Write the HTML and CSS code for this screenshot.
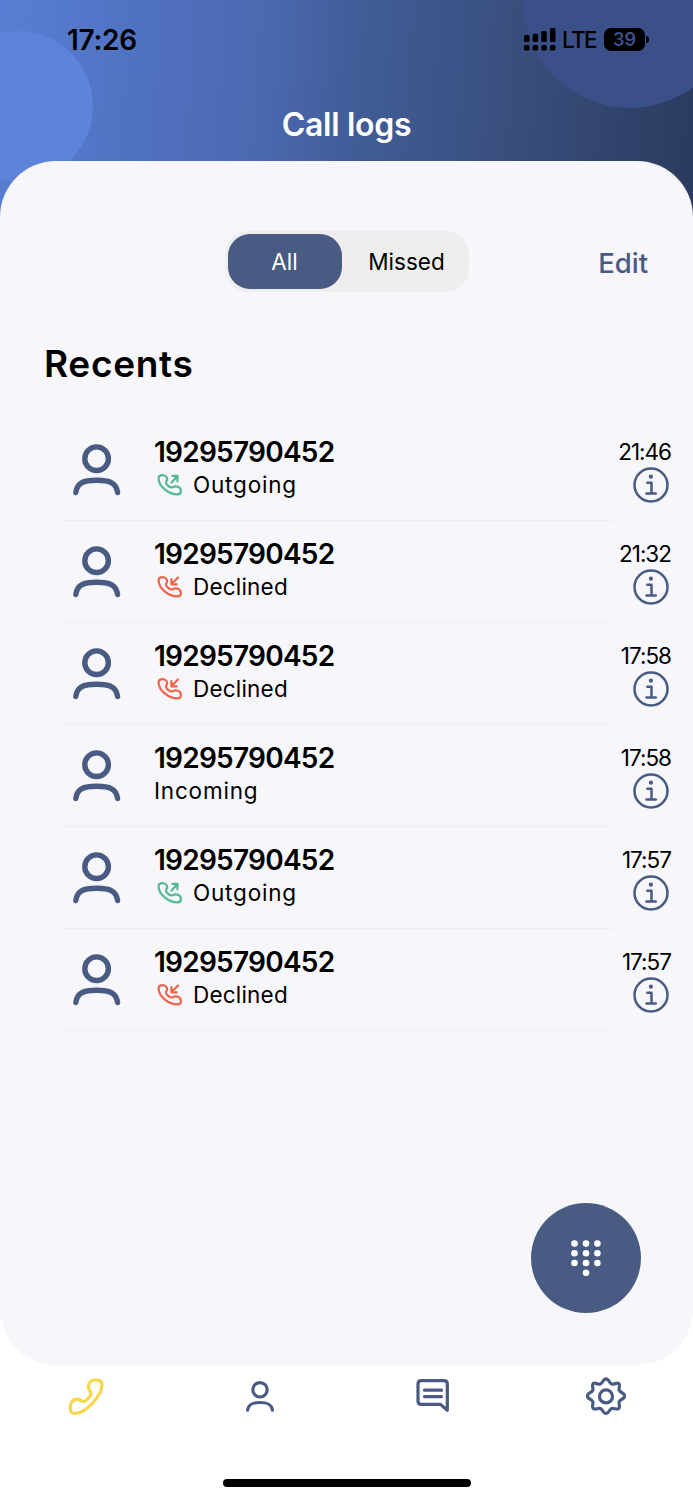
FILE: index.html
```html
<!DOCTYPE html>
<html lang="en">

<head>
  <meta charset="UTF-8">
  <meta name="viewport" content="width=device-width, initial-scale=1.0">
  <title>Call logs</title>
  <link rel="stylesheet" href="styles.css">
</head>

<body>
  <!-- shared icons -->
  <svg class="sprite" width="0" height="0">
    <symbol id="user" viewBox="0 0 48 52">
      <circle cx="23.6" cy="14.7" r="11.8" />
      <path d="M2.800 48.500C4 39 10 36.300 23.600 36.300S43.300 39 44.600 48.500" />
    </symbol>
    <symbol id="handset" viewBox="0 0 26 22">
      <path d="M1.600 3.500C2.200 1.800 4 1.100 5.600 1.200 8 1.300 10 3 10.200 5c.2 1.600-1.300 2.200-1.200 3.700.1 1.700 3.300 4.600 5.200 4.800 1.700.2 2.300-1.300 4.500-1.100 2.900.2 5.200 2 5.200 4.800 0 2.200-1.100 3.100-3.200 3.200C12 20.500 1 12.600 1.600 3.500Z" />
    </symbol>
    <symbol id="outgoing" viewBox="0 0 26 22">
      <use href="#handset" />
      <path d="M14.500 8.500 20.500 2M15.500 1.900h5v5.400" />
    </symbol>
    <symbol id="declined" viewBox="0 0 26 22">
      <use href="#handset" />
      <path d="M21 1.500 14.500 8M14.400 3.200v5.100h5.300" />
    </symbol>
    <symbol id="info" viewBox="0 0 36 36">
      <circle cx="18" cy="18" r="16.500" />
      <path d="M14.300 15.800h4.200v10.500M13.500 26.500h9.300" />
      <circle class="dot" cx="17.900" cy="9.700" r="2.100" />
    </symbol>
  </svg>

  <div class="phone">
    <div class="top">
      <span class="bubble bubble-left"></span>
      <span class="bubble bubble-right"></span>
      <div class="status">
        <span class="clock">17:26</span>
        <div class="signal-box">
          <svg class="signal" width="32" height="23" viewBox="0 0 32 23">
            <rect x="0" y="7" width="5.500" height="7" rx="1.500" />
            <rect x="8.700" y="5.700" width="5.500" height="8.300" rx="1.500" />
            <rect x="17.300" y="3" width="5.500" height="11" rx="1.500" />
            <rect x="26" y="0" width="5.500" height="14" rx="1.500" />
            <rect x="0" y="17" width="5.500" height="5.500" rx="1.500" />
            <rect x="8.700" y="17" width="5.500" height="5.500" rx="1.500" />
            <rect x="17.300" y="17" width="5.500" height="5.500" rx="1.500" />
            <rect x="26" y="17" width="5.500" height="5.500" rx="1.500" />
          </svg>
          <span class="lte">LTE</span>
          <span class="battery">39</span>
          <span class="cap"></span>
        </div>
      </div>
      <h1>Call logs</h1>
    </div>

    <main class="panel">
      <div class="toolbar">
        <div class="tabs">
          <span class="tab active">All</span>
          <span class="tab">Missed</span>
        </div>
        <span class="edit">Edit</span>
      </div>

      <h2>Recents</h2>

      <ul class="list">
        <li class="item">
          <svg class="avatar"><use href="#user" /></svg>
          <div class="call">
            <b class="number">19295790452</b>
            <div class="type wide"><svg class="green"><use href="#outgoing" /></svg>Outgoing</div>
          </div>
          <div class="side"><span>21:46</span><svg class="info"><use href="#info" /></svg></div>
        </li>
        <li class="item">
          <svg class="avatar"><use href="#user" /></svg>
          <div class="call">
            <b class="number">19295790452</b>
            <div class="type"><svg class="red"><use href="#declined" /></svg>Declined</div>
          </div>
          <div class="side"><span>21:32</span><svg class="info"><use href="#info" /></svg></div>
        </li>
        <li class="item">
          <svg class="avatar"><use href="#user" /></svg>
          <div class="call">
            <b class="number">19295790452</b>
            <div class="type"><svg class="red"><use href="#declined" /></svg>Declined</div>
          </div>
          <div class="side"><span>17:58</span><svg class="info"><use href="#info" /></svg></div>
        </li>
        <li class="item">
          <svg class="avatar"><use href="#user" /></svg>
          <div class="call">
            <b class="number">19295790452</b>
            <div class="type wide">Incoming</div>
          </div>
          <div class="side"><span>17:58</span><svg class="info"><use href="#info" /></svg></div>
        </li>
        <li class="item">
          <svg class="avatar"><use href="#user" /></svg>
          <div class="call">
            <b class="number">19295790452</b>
            <div class="type wide"><svg class="green"><use href="#outgoing" /></svg>Outgoing</div>
          </div>
          <div class="side"><span>17:57</span><svg class="info"><use href="#info" /></svg></div>
        </li>
        <li class="item">
          <svg class="avatar"><use href="#user" /></svg>
          <div class="call">
            <b class="number">19295790452</b>
            <div class="type"><svg class="red"><use href="#declined" /></svg>Declined</div>
          </div>
          <div class="side"><span>17:57</span><svg class="info"><use href="#info" /></svg></div>
        </li>
      </ul>

      <div class="dial">
        <svg width="30" height="37" viewBox="0 0 30 37">
          <circle cx="3.500" cy="3.600" r="3.300" /><circle cx="15" cy="3.600" r="3.300" /><circle cx="26.400" cy="3.600" r="3.300" />
          <circle cx="3.500" cy="13.300" r="3.300" /><circle cx="15" cy="13.300" r="3.300" /><circle cx="26.400" cy="13.300" r="3.300" />
          <circle cx="3.500" cy="23" r="3.300" /><circle cx="15" cy="23" r="3.300" /><circle cx="26.400" cy="23" r="3.300" />
          <circle cx="15" cy="32.700" r="3.300" />
        </svg>
      </div>
    </main>

    <nav class="nav">
      <svg class="yellow" width="40" height="40" viewBox="1 -1 40 40">
        <path d="M22.300 9.500C22.500 5.500 25.500 3 29.500 3c4.200 0 6.700 1.300 6.500 5-.5 11-15.500 27.500-26.500 28.500C6 36.700 4.200 35 4.100 30.500 4 26 7 22.700 10.500 22.100c4-.7 4.500 2.700 7 2.500 2.700-.2 7.300-5.500 7.500-8 .2-2.300-2.900-3.300-2.700-7.100Z" />
      </svg>
      <svg width="28" height="31" viewBox="0 0 28 31">
        <circle cx="14" cy="8.800" r="7.200" />
        <path d="M1.500 29.200C2.200 23.500 6 21.500 14 21.500s11.800 2 12.500 7.700" />
      </svg>
      <svg width="34" height="34" viewBox="0 0 34 34">
        <path d="M31.300 31.200V5Q31.300 1.700 28 1.700H5.300Q2 1.700 2 5v17q0 3.400 3.300 3.400h19.200Z" />
        <path d="M8.500 11.200h17M8.500 17.600h17" />
      </svg>
      <svg width="40" height="40" viewBox="0 0 40 40">
        <path d="M20 2.800c3 0 3.200 4.500 5.600 5.300 2.300.8 5.200-2 7.100-.7 2 1.600-.3 4.700.5 6.800.7 2.400 5.500 2.800 5.500 5.800s-4.800 3.200-5.500 5.600c-.8 2.300 1.500 5.200-.5 6.900-1.900 1.600-4.800-.8-7.100.1-2.400.8-2.600 5-5.600 5s-3.200-4.200-5.600-5c-2.300-.9-5.200 1.500-7.100-.1-2-1.700.3-4.600-.5-6.900-.7-2.400-5.500-2.600-5.500-5.600s4.800-3.400 5.500-5.800c.8-2.100-1.500-5.200.5-6.800 1.900-1.300 4.800 1.500 7.100.7C16.800 7.300 17 2.800 20 2.800Z" />
        <circle cx="20" cy="20.400" r="6.500" />
      </svg>
    </nav>
    <div class="home-bar"></div>
  </div>
</body>

</html>
```
FILE: styles.css
```css
* {
  box-sizing: border-box;
}

body {
  margin: 0;
  color: #000;
  background: #fff;
  font-family: Inter, "Liberation Sans", sans-serif;
}

h1, h2, ul {
  margin: 0;
  padding: 0;
}

svg {
  display: block;
  flex: none;
  fill: none;
  stroke: #495b82;
  stroke-linecap: round;
  stroke-linejoin: round;
}

.sprite {
  position: absolute;
}

.phone {
  display: flex;
  flex-direction: column;
  width: 693px;
  height: 1500px;
  overflow: hidden;
}

/* gradient runs on behind the rounded corners of the panel */
.top {
  position: relative;
  flex: none;
  height: 221px;
  margin-bottom: -60px;
  overflow: hidden;
  background: linear-gradient(94deg, #587fd3 0%, #5070c0 22%, #4a69b0 38%, #425d99 50%, #384e7c 74%, #2b3b5e 100%);
}

.bubble {
  position: absolute;
  border-radius: 50%;
}

.bubble-left {
  left: -57px;
  top: 31px;
  width: 150px;
  height: 150px;
  background: #5e83da;
}

.bubble-right {
  left: 523px;
  top: -106px;
  width: 214px;
  height: 214px;
  background: #3b5088;
}

.status {
  position: relative;
  display: flex;
  align-items: center;
  justify-content: space-between;
  height: 79px;
  padding: 0 44px 0 67px;
}

.clock {
  font-size: 28px;
  font-weight: 600;
  letter-spacing: -0.3px;
}

.signal-box {
  display: flex;
  align-items: center;
}

.signal {
  fill: #000;
  stroke: none;
}

.lte {
  margin-left: 6px;
  font-size: 22.5px;
  font-weight: 500;
  letter-spacing: -1.6px;
}

.battery {
  width: 41px;
  margin-left: 8px;
  border-radius: 7px;
  color: #3b5088;
  background: #000;
  font-size: 18px;
  font-weight: 600;
  line-height: 23px;
  text-align: center;
}

.cap {
  width: 3px;
  height: 7px;
  margin-left: 1px;
  border-radius: 0 4px 4px 0;
  background: #000;
}

h1 {
  position: relative;
  padding-top: 25px;
  color: #fff;
  font-size: 32px;
  font-weight: 600;
  line-height: 42px;
  letter-spacing: -0.3px;
  text-align: center;
}

.panel {
  position: relative;
  flex: none;
  height: 1204px;
  padding-top: 70px;
  border-radius: 56px;
  background: #f6f6fb;
}

.toolbar {
  display: grid;
  grid-template-columns: 1fr 244px 1fr;
  align-items: center;
  padding-right: 45px;
  padding-left: 45px;
}

.tabs {
  display: grid;
  grid-column: 2;
  grid-template-columns: 114px 1fr;
  height: 61px;
  padding: 3px;
  border-radius: 23px;
  background: #eee;
}

.tab {
  padding-left: 6px;
  border-radius: 22px;
  font-size: 22.5px;
  line-height: 55px;
  text-align: center;
}

.tab.active {
  padding-left: 0;
  color: #fff;
  background: #495b82;
}

.edit {
  justify-self: end;
  padding-top: 2px;
  color: #495b82;
  font-size: 27.5px;
  font-weight: 500;
}

h2 {
  margin: 46px 0 0 44px;
  font-size: 37px;
  font-weight: 600;
  line-height: 52px;
  letter-spacing: 0.7px;
}

.list {
  margin-top: 29px;
  list-style: none;
}

.item {
  display: flex;
  height: 102px;
  padding: 16px 22px 0 73px;
  background: linear-gradient(#ededf2, #ededf2) 62px 100% / 551px 1.500px no-repeat;
}

.avatar {
  width: 48px;
  height: 52px;
  margin: 9px 33px 0 0;
  stroke-width: 5.400;
}

.call {
  flex: 1;
}

.number {
  display: block;
  font-size: 28px;
  font-weight: 600;
  line-height: 34px;
  letter-spacing: -0.75px;
}

.type {
  display: flex;
  align-items: center;
  font-size: 22.5px;
  line-height: 32px;
  letter-spacing: 0.2px;
}

.type.wide {
  letter-spacing: 0.8px;
}

.type svg {
  width: 26px;
  height: 22px;
  margin: 0 10px 0 3px;
  stroke-width: 2.200;
}

.type .green {
  stroke: #51b990;
}

.type .red {
  stroke: #ee654b;
}

.side {
  display: flex;
  flex-direction: column;
  align-items: flex-end;
  padding-top: 1px;
  font-size: 22.5px;
  line-height: 31px;
  letter-spacing: -1px;
}

.info {
  width: 36px;
  height: 36px;
  margin-right: 2px;
  stroke-width: 2.500;
}

.dot {
  fill: #495b82;
  stroke: none;
}

.dial {
  position: absolute;
  right: 52.500px;
  bottom: 52px;
  display: flex;
  align-items: center;
  justify-content: center;
  width: 110px;
  height: 110px;
  border-radius: 50%;
  background: #495b82;
}

.dial svg {
  fill: #fff;
  stroke: none;
}

.nav {
  display: grid;
  grid-template-columns: repeat(4, 1fr);
  align-items: center;
  justify-items: center;
  height: 62px;
  stroke-width: 3.200;
}

.nav .yellow {
  stroke: #f9d548;
}

.home-bar {
  width: 248px;
  height: 8px;
  margin: 52px auto 0;
  border-radius: 4px;
  background: #000;
}
```
